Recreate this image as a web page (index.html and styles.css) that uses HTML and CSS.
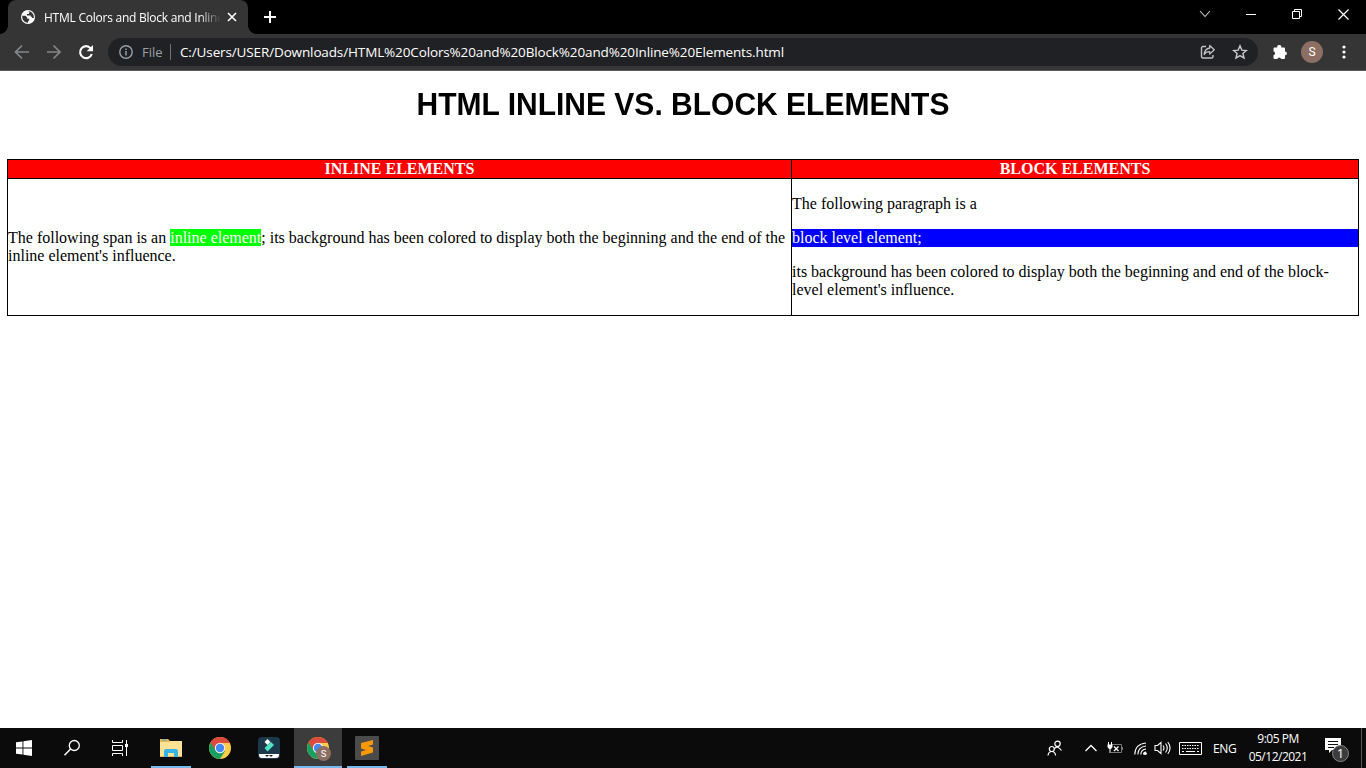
FILE: index.html
```html
<!DOCTYPE html>
<html lang="en">
<head>
<meta charset="utf-8">
<title>HTML Colors and Block and Inline Elements</title>
<link rel="stylesheet" href="styles.css">
</head>
<body>
<div class="screen">
  <header class="tabstrip">
    <div class="tab">
      <svg class="globe" width="14" height="14" viewBox="0 0 14 14"><circle cx="7" cy="7" r="7" fill="#fff"/><path d="M1.2 5.8h3.3L6.2 7.5v1.3h2v1.4L7 11.5v1.2C3.9 12.8 1.2 10 1.2 7z" fill="#353535"/><path d="M6.2 1.8h2.2v.8L7.7 4H5.9v1.6h3.7v1.2h1.3V8h2c.3-3.3-1.5-5.7-4.3-6.7z" fill="#353535"/></svg>
      <span class="tab-title">HTML Colors and Block and Inline</span>
      <svg class="tab-x" width="10" height="10" viewBox="0 0 10 10"><path d="M1 1l8 8M9 1L1 9" stroke="#fff" stroke-width="1.6"/></svg>
    </div>
    <svg class="plus" width="12" height="12" viewBox="0 0 12 12"><path d="M6 0v12M0 6h12" stroke="#fff" stroke-width="2"/></svg>
    <div class="window-buttons">
      <span><svg width="12" height="8" viewBox="0 0 12 8"><path d="M1 1l5 5.5L11 1" fill="none" stroke="#ccc" stroke-width="1.1"/></svg></span>
      <span><svg width="10" height="10" viewBox="0 0 10 10"><path d="M0 5.5h10" stroke="#fff"/></svg></span>
      <span><svg width="10" height="10" viewBox="0 0 10 10"><path d="M.5 2.5h7v7h-7zM2.5 2.5v-2h7v7h-2" fill="none" stroke="#fff"/></svg></span>
      <span><svg width="11" height="11" viewBox="0 0 11 11"><path d="M.5.5l10 10M10.5.5l-10 10" stroke="#fff" stroke-width="1.2"/></svg></span>
    </div>
  </header>
  <div class="toolbar">
    <div class="nav">
      <svg width="32" height="36" viewBox="0 0 32 36"><path d="M23 18H10M16 11.500L9.500 18l6.500 6.500" fill="none" stroke="#858688" stroke-width="1.7"/></svg>
      <svg width="32" height="36" viewBox="0 0 32 36"><path d="M9 18h12.500M15.500 11.500L22 18l-6.500 6.500" fill="none" stroke="#858688" stroke-width="1.7"/></svg>
      <svg width="32" height="36" viewBox="0 0 32 36"><path d="M20.700 14.300A6 6 0 1 0 21.800 20" fill="none" stroke="#fff" stroke-width="2.100"/><path d="M23 11v6.300h-6.300z" fill="#fff"/></svg>
    </div>
    <div class="omnibox">
      <svg class="info" width="14" height="14" viewBox="0 0 14 14"><circle cx="7" cy="7" r="6.200" fill="none" stroke="#9aa0a6" stroke-width="1.400"/><path d="M7 6v4.500M7 3.400v1.500" stroke="#9aa0a6" stroke-width="1.500"/></svg>
      <span class="scheme">File</span>
      <span class="rule"></span>
      <span class="url">C:/Users/USER/Downloads/HTML%20Colors%20and%20Block%20and%20Inline%20Elements.html</span>
      <svg class="share" width="16" height="16" viewBox="0 0 16 16"><path d="M6 2.500H3Q1.500 2.500 1.500 4v8.500Q1.500 14 3 14h8.500Q13 14 13 12.500V11" fill="none" stroke="#bfc2c5" stroke-width="1.400"/><path d="M9.700 1.500l4.600 4.300-4.600 4.300V7.700C7 7.700 5.300 8.500 4.200 10.500 4.500 7 6.500 4.500 9.700 4z" fill="none" stroke="#bfc2c5" stroke-width="1.300" stroke-linejoin="round"/></svg>
      <svg class="star" width="16" height="16" viewBox="0 0 16 16"><path d="M8 1.800l1.800 4.300 4.600.4-3.500 3 1.100 4.500-4-2.400L4 14l1.100-4.500-3.500-3 4.600-.4z" fill="none" stroke="#c8cacc" stroke-width="1.400"/></svg>
    </div>
    <svg class="puzzle" width="16" height="16" viewBox="0 0 16 16"><path d="M2 3.500h3.300a2 2 0 1 1 3.900 0H12q1 0 1 1v3a1.900 1.900 0 1 1 0 3.800V14q0 1-1 1H9.200a2 2 0 0 0-3.900 0H2.500Q1.500 15 1.500 14v-2.800a2 2 0 0 0 0-3.900V4.500q0-1 1-1z" fill="#fff"/></svg>
    <span class="avatar">S</span>
    <svg class="dots" width="4" height="14" viewBox="0 0 4 14"><g fill="#fff"><circle cx="2" cy="2" r="1.600"/><circle cx="2" cy="7" r="1.600"/><circle cx="2" cy="12" r="1.600"/></g></svg>
  </div>

  <main class="page">
    <h1>HTML INLINE VS. BLOCK ELEMENTS</h1>
    <div class="compare">
      <div class="head">INLINE ELEMENTS</div>
      <div class="head">BLOCK ELEMENTS</div>
      <div class="cell middle"><div>The following span is an <span class="lime">inline element</span>; its background has been colored to display both the beginning and the end of the<br>inline element's influence.</div></div>
      <div class="cell">
        <p>The following paragraph is a</p>
        <p class="blue">block level element;</p>
        <p>its background has been colored to display both the beginning and end of the block-<br>level element's influence.</p>
      </div>
    </div>
  </main>

  <footer class="taskbar">
    <div class="system">
      <span><svg width="16" height="16" viewBox="0 0 16 16"><path d="M0 2.300L6.500 1.400V7.500H0zM7.400 1.200L16 0v7.500H7.400zM0 8.500h6.500v6.100L0 13.700zM7.400 8.500H16V16l-8.600-1.200z" fill="#fff"/></svg></span>
      <span><svg width="18" height="18" viewBox="0 0 18 18"><circle cx="11.300" cy="6.500" r="5" fill="none" stroke="#fff" stroke-width="1.300"/><path d="M7.600 10L1.500 16.300" stroke="#fff" stroke-width="1.500"/></svg></span>
      <span><svg width="16" height="16" viewBox="0 0 16 16"><path d="M.5 0v2.500h10V0M.5 5.500h10v5H.5zM.5 16v-2.500h10V16M14.500 0v16" fill="none" stroke="#fff"/><path d="M13 4h3v3h-3z" fill="#fff"/></svg></span>
    </div>
    <div class="apps">
      <span class="open"><svg width="22" height="20" viewBox="0 0 22 20"><path d="M0 1h8l2 2h12v16H0z" fill="#e9b954"/><path d="M0 4h9l2-1h11v15H0z" fill="#ffe294"/><path d="M2 1.500h5v1H2z" fill="#3ba9df"/><path d="M4 19v-6q0-2 2-2h10q2 0 2 2v6h-4v-4H8v4z" fill="#35b4e9"/></svg></span>
      <span><svg width="22" height="22" viewBox="0 0 22 22"><circle cx="11" cy="11" r="11" fill="#fbcd46"/><path d="M11 11L1.500 5.500A11 11 0 0 0 11 22l5-8z" fill="#18a05e"/><path d="M1.500 5.500A11 11 0 0 1 20.800 6H11l-4.500 7.500z" fill="#dc4b3e"/><circle cx="11" cy="11" r="5.200" fill="#f4f4f4"/><circle cx="11" cy="11" r="4.200" fill="#4688f4"/></svg></span>
      <span><svg width="22" height="22" viewBox="0 0 22 22"><rect width="22" height="22" rx="4" fill="#1c394c"/><path d="M1 17h20v1q0 3-3 3H4q-3 0-3-3z" fill="#fff"/><path d="M6.500 11L13 5l3 3-6.500 6.500z" fill="#50e3c2"/><path d="M9.500 2l3 3-3 3-3-3z" fill="#fff"/><path d="M7 18l2 2 2-2 2 2 2-2z" fill="#222"/></svg></span>
      <span class="active"><svg width="26" height="26" viewBox="0 0 26 26"><g transform="translate(2 2)"><circle cx="11" cy="11" r="11" fill="#fbcd46"/><path d="M11 11L1.500 5.500A11 11 0 0 0 11 22l5-8z" fill="#18a05e"/><path d="M1.500 5.500A11 11 0 0 1 20.800 6H11l-4.500 7.500z" fill="#dc4b3e"/><circle cx="11" cy="11" r="5.200" fill="#f4f4f4"/><circle cx="11" cy="11" r="4.200" fill="#4688f4"/></g><circle cx="18.500" cy="18.500" r="7.500" fill="#8d6e63"/><text x="18.500" y="22" text-anchor="middle" class="mini-s">S</text></svg></span>
      <span class="open"><svg width="24" height="24" viewBox="0 0 24 24"><rect width="24" height="24" rx="1" fill="#4b4b4b"/><path d="M6 7l12-3v4.600L13 10l5 1.600v4.900L6 20v-4.600L11 14l-5-1.600z" fill="#ff9800"/></svg></span>
    </div>
    <div class="tray">
      <svg width="16" height="16" viewBox="0 0 16 16"><g fill="none" stroke="#fff" stroke-width="1.200"><circle cx="10.500" cy="3.800" r="2.700"/><path d="M7.500 8.500Q10.500 5 14.500 10.500"/><circle cx="4.800" cy="9" r="2.500"/><path d="M1 15.500q.5-4 3.800-4t3.800 4"/></g></svg>
      <svg class="caret" width="12" height="8" viewBox="0 0 12 8"><path d="M.5 7L6 1.500 11.500 7" fill="none" stroke="#fff" stroke-width="1.300"/></svg>
      <svg class="battery" width="16" height="12" viewBox="0 0 16 12"><path d="M5 2.500h9.500v8H4M15.500 5v3" fill="none" stroke="#777"/><path d="M1.500 0v3M4.500 0v3M3 6v5" stroke="#fff"/><path d="M.5 2.500h5V5L4 7H2L.5 5z" fill="#fff"/><path d="M7 4.500L11.500 9M11.500 4.500L7 9" stroke="#fff" stroke-width="1.300"/></svg>
      <svg class="wifi" width="13" height="13" viewBox="0 0 13 13"><g fill="none" stroke="#fff" stroke-width="1.100"><path d="M.8 12.500Q1 2 12 1M3.800 12.500Q4 5 12 4M6.800 12.500Q7 7.500 12 7"/><path d="M9.500 12.500q0-2.500 2.500-2.500"/></g><circle cx="11.300" cy="11.500" r="1.500" fill="#fff"/></svg>
      <svg class="sound" width="17" height="14" viewBox="0 0 17 14"><path d="M1 4.500h2.500L7 1.500v11L3.500 9.500H1zM9 4.500q2 2.500 0 5M11.500 2.500q3.500 4.500 0 9M13.800 1q4.500 6 0 12" fill="none" stroke="#fff" stroke-width="1.100"/></svg>
      <svg class="keyboard" width="23" height="13" viewBox="0 0 23 13"><path d="M.5.500h22v12H.5z" fill="none" stroke="#fff"/><path d="M3 3.500h17M3 6.500h17" stroke="#fff" stroke-dasharray="1.500 1"/><path d="M3 9.500h2M7 9.500h9M18 9.500h2" stroke="#fff"/></svg>
      <span class="lang">ENG</span>
      <div class="clock"><span>9:05 PM</span><span>05/12/2021</span></div>
      <svg class="notice" width="25" height="25" viewBox="0 0 25 25"><path d="M0 0h16v12H7l-3 3v-3H0z" fill="#fff"/><path d="M3 3.500h10M3 6.500h10M3 9.500h6" stroke="#111"/><circle cx="15.500" cy="15.500" r="8" fill="#3c3c3c" stroke="#85878a"/><text x="15.500" y="20" text-anchor="middle" class="count">1</text></svg>
      <span class="peek"></span>
    </div>
  </footer>
</div>
</body>
</html>
```
FILE: styles.css
```css
* { box-sizing: border-box; }
body { margin: 0; }
svg { display: block; flex: none; }
.screen { width: 1366px; height: 768px; display: flex; flex-direction: column; overflow: hidden; background: #fff; }
.tabstrip { height: 34px; background: #000; display: flex; align-items: center; font-family: "Open Sans", sans-serif; }
.tab { position: relative; margin-left: 8px; width: 240px; height: 34px; background: #353535; border-radius: 8px 8px 0 0; display: flex; align-items: center; padding-left: 13px; }
.tab::before, .tab::after { content: ""; position: absolute; bottom: 0; width: 8px; height: 8px; }
.tab::before { left: -8px; background: radial-gradient(circle at 0 0, #000 7.5px, #353535 8px); }
.tab::after { right: -8px; background: radial-gradient(circle at 100% 0, #000 7.5px, #353535 8px); }
.tab-title { margin-left: 9px; width: 182px; white-space: nowrap; font-size: 12px; letter-spacing: -0.24px; color: #fff; -webkit-mask-image: linear-gradient(90deg, #000 155px, transparent 177px); mask-image: linear-gradient(90deg, #000 155px, transparent 177px); }
.tab-x { margin-left: 1px; }
.plus { margin-left: 16px; }
.window-buttons { margin-left: auto; display: flex; align-self: flex-start; }
.window-buttons span { width: 46px; height: 28px; display: flex; align-items: center; justify-content: center; }
.toolbar { height: 37px; background: #353535; border-bottom: 1px solid #5b5b5b; display: flex; align-items: center; font-family: "Open Sans", sans-serif; }
.nav { display: flex; margin-left: 6px; width: 102px; }
.omnibox { width: 1150px; height: 28px; border-radius: 14px; background: #202124; display: flex; align-items: center; padding-left: 11px; }
.scheme { margin-left: 9px; width: 22px; font-size: 13px; color: #9aa0a6; }
.rule { width: 1px; height: 16px; background: #6d7074; margin: 0 9px 0 6px; }
.url { width: 620px; white-space: nowrap; font-size: 13.5px; letter-spacing: -0.13px; color: #fff; }
.share { margin-left: auto; }
.star { margin: 0 10px 0 16px; }
.puzzle { margin-left: 14px; }
.avatar { margin-left: 13px; width: 22px; height: 22px; border-radius: 50%; background: #8d6e63; color: #fff; font: 12px/22px Roboto, sans-serif; text-align: center; }
.dots { margin-left: 19px; }
.page { height: 657px; padding: 0 7px; font: 16px/18px "Liberation Serif", serif; color: #000; }
h1 { margin: 15px 0 35px; font: bold 31px/38px "Liberation Sans", sans-serif; text-align: center; transform: scaleX(0.968); }
.compare { display: grid; grid-template-columns: 784px 567px; width: 1352px; border: 1px solid #000; border-width: 1px 0 0 1px; }
.head { height: 19px; line-height: 18px; background: #f00; color: #fff; font-weight: bold; text-align: center; border: 1px solid #000; border-width: 0 1px 1px 0; }
.cell { height: 137px; border: 1px solid #000; border-width: 0 1px 1px 0; padding-top: 16px; white-space: nowrap; }
.cell.middle { padding: 0; display: flex; align-items: center; }
.cell p { margin: 0 0 16px; }
.lime { background: #0f0; color: #fff; }
.blue { background: #00f; color: #fff; }
.taskbar { height: 40px; background: #0b0b0b; display: flex; font-family: "Open Sans", sans-serif; color: #fff; }
.system, .apps { display: flex; }
.system span { width: 48px; display: flex; align-items: center; justify-content: center; }
.apps { margin-left: 3px; gap: 1px; }
.apps span { position: relative; width: 48px; display: flex; align-items: center; justify-content: center; }
.apps .active { background: #3c3c3c; }
.open::after, .active::after { content: ""; position: absolute; bottom: 0; left: 4px; right: 4px; height: 2px; background: #76b9ed; }
.active::after { left: 0; right: 0; }
.mini-s { font: 9.5px Roboto, sans-serif; fill: #fff; }
.tray { margin-left: auto; display: flex; align-items: center; width: 319px; }
.caret { margin-left: 22px; }
.battery { margin-left: 10px; }
.wifi { margin-left: 11px; }
.sound { margin-left: 7px; }
.keyboard { margin-left: 8px; }
.lang { margin-left: 11px; width: 24px; font-size: 12px; letter-spacing: -0.4px; }
.clock { margin-left: 10px; width: 62px; display: flex; flex-direction: column; align-items: center; font-size: 12px; line-height: 18px; letter-spacing: -0.5px; white-space: nowrap; }
.notice { margin: 4px 0 0 16px; }
.count { font: 13px "Open Sans", sans-serif; fill: #fff; }
.peek { margin-left: auto; margin-right: 4px; width: 1px; height: 40px; background: #555; }
```
